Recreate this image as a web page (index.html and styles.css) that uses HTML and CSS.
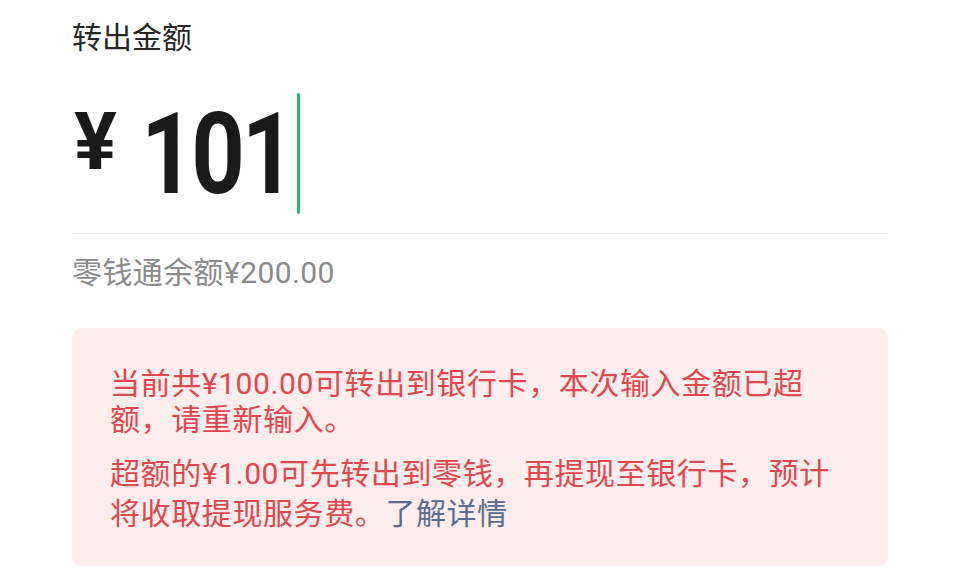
FILE: index.html
```html
<!DOCTYPE html>
<html lang="zh-CN">
<head>
  <meta charset="UTF-8" />
  <meta name="viewport" content="width=device-width, initial-scale=1.0" />
  <title>转出金额</title>
  <link rel="stylesheet" href="styles.css">
</head>
<body>
  <div class="page">
    <div class="label">转出金额</div>

    <div class="amount-row">
      <span class="currency">¥</span>
      <span class="amount">101</span>
      <span class="cursor"></span>
    </div>

    <div class="balance">零钱通余额¥200.00</div>

    <div class="notice">
      <p>当前共¥100.00可转出到银行卡，本次输入金额已超额，请重新输入。</p>
      <p class="tip">超额的¥1.00可先转出到零钱，再提现至银行卡，预计将收取提现服务费。<a href="#" class="more">了解详情</a></p>
    </div>
  </div>
</body>
</html>
```

FILE: styles.css
```css
body {
  margin: 0;
  background: #ffffff;
  font-family: Roboto, "Noto Sans CJK SC", sans-serif;
}

.page {
  padding: 20px 72px 0;
}

.label {
  font-size: 30px;
  line-height: 36px;
  color: #262626;
}

.amount-row {
  display: flex;
  align-items: flex-start;
  height: 121px;
  margin-top: 37px;
  padding-bottom: 19px;
  border-bottom: 1px solid #ececec;
}

.currency {
  font-size: 80px;
  font-weight: 700;
  line-height: 1;
  color: #1a1a1a;
  margin-top: 9px;
  margin-left: 2px;
}

/* digits of the amount font are narrower than Roboto's */
.amount {
  display: inline-block;
  font-size: 114px;
  font-weight: 700;
  line-height: 1;
  color: #1a1a1a;
  margin-top: 4px;
  margin-left: 24px;
  margin-right: -28px;
  letter-spacing: -4px;
  transform: scaleX(0.82);
  transform-origin: left center;
}

.cursor {
  width: 3px;
  height: 121px;
  border-radius: 2px;
  background: #1fbf6a;
}

.balance {
  margin-top: 21px;
  font-size: 30px;
  line-height: 36px;
  letter-spacing: 0.4px;
  color: #8a8a8a;
}

.notice {
  margin-top: 37px;
  padding: 38px 53px 32px 38px;
  border-radius: 10px;
  background: #fdeded;
  color: #e0484f;
  font-size: 30px;
  line-height: 36px;
  letter-spacing: 0.6px;
}

.notice p {
  margin: 0;
}

.notice .tip {
  margin-top: 16px;
  line-height: 40px;
}

.more {
  color: #5a6a8f;
  text-decoration: none;
}
```
